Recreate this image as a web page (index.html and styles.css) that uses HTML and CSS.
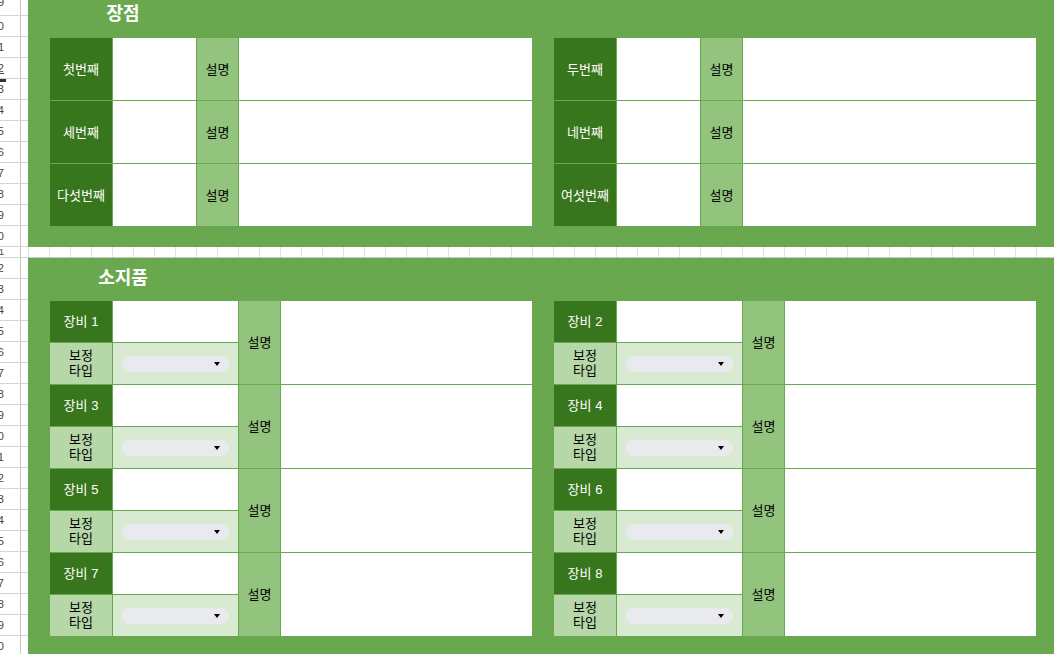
FILE: index.html
```html
<!DOCTYPE html>
<html lang="ko">
<head>
<meta charset="utf-8">
<title>장점 / 소지품</title>
<link rel="stylesheet" href="styles.css">
</head>
<body>
<div class="sheet">
  <div class="rowhdr">
    <div class="rh rh-first"><span class="num num-first">9</span><span class="pad"></span></div>
    <div class="rh"><span class="num">10</span><span class="pad"></span></div>
    <div class="rh"><span class="num">11</span><span class="pad"></span></div>
    <div class="rh"><span class="num num-ul">12</span><span class="pad"></span></div>
    <div class="rh"><span class="num num-mark">13</span><span class="pad"></span></div>
    <div class="rh"><span class="num">14</span><span class="pad"></span></div>
    <div class="rh"><span class="num">15</span><span class="pad"></span></div>
    <div class="rh"><span class="num">16</span><span class="pad"></span></div>
    <div class="rh"><span class="num">17</span><span class="pad"></span></div>
    <div class="rh"><span class="num">18</span><span class="pad"></span></div>
    <div class="rh"><span class="num">19</span><span class="pad"></span></div>
    <div class="rh"><span class="num">20</span><span class="pad"></span></div>
    <div class="rh rh-gap"><span class="num num-small">21</span><span class="pad"></span></div>
    <div class="rh"><span class="num">22</span><span class="pad"></span></div>
    <div class="rh"><span class="num">23</span><span class="pad"></span></div>
    <div class="rh"><span class="num">24</span><span class="pad"></span></div>
    <div class="rh"><span class="num">25</span><span class="pad"></span></div>
    <div class="rh"><span class="num">26</span><span class="pad"></span></div>
    <div class="rh"><span class="num">27</span><span class="pad"></span></div>
    <div class="rh"><span class="num">28</span><span class="pad"></span></div>
    <div class="rh"><span class="num">29</span><span class="pad"></span></div>
    <div class="rh"><span class="num">30</span><span class="pad"></span></div>
    <div class="rh"><span class="num">31</span><span class="pad"></span></div>
    <div class="rh"><span class="num">32</span><span class="pad"></span></div>
    <div class="rh"><span class="num">33</span><span class="pad"></span></div>
    <div class="rh"><span class="num">34</span><span class="pad"></span></div>
    <div class="rh"><span class="num">35</span><span class="pad"></span></div>
    <div class="rh"><span class="num">36</span><span class="pad"></span></div>
    <div class="rh"><span class="num">37</span><span class="pad"></span></div>
    <div class="rh"><span class="num">38</span><span class="pad"></span></div>
    <div class="rh"><span class="num">39</span><span class="pad"></span></div>
    <div class="rh"><span class="num">40</span><span class="pad"></span></div>
  </div>

  <div class="content">
    <section class="sec sec1">
      <div class="title t1">장점</div>
      <div class="tables">
        <div class="tbl tbl-a">
          <div class="hd">첫번째</div><div class="in"></div><div class="lb">설명</div><div class="in"></div>
          <div class="hd">세번째</div><div class="in"></div><div class="lb">설명</div><div class="in"></div>
          <div class="hd">다섯번째</div><div class="in"></div><div class="lb">설명</div><div class="in"></div>
        </div>
        <div class="tbl tbl-a">
          <div class="hd">두번째</div><div class="in"></div><div class="lb">설명</div><div class="in"></div>
          <div class="hd">네번째</div><div class="in"></div><div class="lb">설명</div><div class="in"></div>
          <div class="hd">여섯번째</div><div class="in"></div><div class="lb">설명</div><div class="in"></div>
        </div>
      </div>
    </section>

    <div class="gaprow"></div>

    <section class="sec sec2">
      <div class="title t2">소지품</div>
      <div class="tables">
        <div class="tbl tbl-b">
          <div class="hd">장비 1</div><div class="in"></div><div class="lb span2">설명</div><div class="in span2"></div>
          <div class="ty">보정<br>타입</div><div class="dd"><span class="chip"><span class="caret"></span></span></div>
          <div class="hd">장비 3</div><div class="in"></div><div class="lb span2">설명</div><div class="in span2"></div>
          <div class="ty">보정<br>타입</div><div class="dd"><span class="chip"><span class="caret"></span></span></div>
          <div class="hd">장비 5</div><div class="in"></div><div class="lb span2">설명</div><div class="in span2"></div>
          <div class="ty">보정<br>타입</div><div class="dd"><span class="chip"><span class="caret"></span></span></div>
          <div class="hd">장비 7</div><div class="in"></div><div class="lb span2">설명</div><div class="in span2"></div>
          <div class="ty">보정<br>타입</div><div class="dd"><span class="chip"><span class="caret"></span></span></div>
        </div>
        <div class="tbl tbl-b">
          <div class="hd">장비 2</div><div class="in"></div><div class="lb span2">설명</div><div class="in span2"></div>
          <div class="ty">보정<br>타입</div><div class="dd"><span class="chip"><span class="caret"></span></span></div>
          <div class="hd">장비 4</div><div class="in"></div><div class="lb span2">설명</div><div class="in span2"></div>
          <div class="ty">보정<br>타입</div><div class="dd"><span class="chip"><span class="caret"></span></span></div>
          <div class="hd">장비 6</div><div class="in"></div><div class="lb span2">설명</div><div class="in span2"></div>
          <div class="ty">보정<br>타입</div><div class="dd"><span class="chip"><span class="caret"></span></span></div>
          <div class="hd">장비 8</div><div class="in"></div><div class="lb span2">설명</div><div class="in span2"></div>
          <div class="ty">보정<br>타입</div><div class="dd"><span class="chip"><span class="caret"></span></span></div>
        </div>
      </div>
    </section>
  </div>
</div>
</body>
</html>
```

FILE: styles.css
```css
* {
  box-sizing: border-box;
  margin: 0;
  padding: 0;
}

html,
body {
  width: 1054px;
  height: 654px;
  overflow: hidden;
  background: #ffffff;
}

body {
  font-family: "Liberation Sans", "Noto Sans CJK KR", sans-serif;
  font-size: 13px;
}

.sheet {
  display: flex;
  height: 654px;
  overflow: hidden;
}

/* row header strip */
.rowhdr {
  width: 28px;
  flex: none;
  display: flex;
  flex-direction: column;
}

.rh {
  display: flex;
  flex: none;
  height: 21px;
  border-bottom: 1px solid #d4d4d4;
}

.rh-first {
  height: 16px;
}

.rh-gap {
  height: 11px;
}

.num {
  position: relative;
  width: 21px;
  flex: none;
  display: flex;
  justify-content: flex-end;
  align-items: center;
  padding-right: 16px;
  border-right: 1px solid #c4c4c4;
  overflow: hidden;
  white-space: nowrap;
  font-size: 11px;
  line-height: 12px;
  color: #444444;
}

.num-first {
  align-items: flex-start;
  line-height: 4px;
}

.num-small {
  font-size: 9px;
}

.num-ul {
  text-decoration: underline;
}

.num-mark::before {
  content: "";
  position: absolute;
  left: 0;
  top: 0;
  width: 6px;
  height: 3px;
  background: #333333;
}

.pad {
  flex: 1;
}

/* main content */
.content {
  flex: 1;
  min-width: 0;
  display: flex;
  flex-direction: column;
}

.sec {
  background: #6aa84f;
  flex: none;
}

.sec1 {
  height: 247px;
  padding: 0 0 21px 22px;
}

.sec2 {
  flex: 1;
  padding: 0 0 20px 22px;
}

.title {
  width: 146px;
  text-align: center;
  color: #ffffff;
  font-weight: bold;
  font-size: 18px;
}

.t1 {
  height: 38px;
  line-height: 29px;
}

.t2 {
  height: 43px;
  line-height: 41px;
}

.tables {
  display: flex;
  gap: 22px;
}

.tbl {
  width: 482px;
  flex: none;
  display: grid;
  gap: 1px;
  background: #6aa84f;
}

.tbl-a {
  grid-template-columns: 62px 83px 41px 293px;
  grid-auto-rows: 62px;
}

.tbl-b {
  grid-template-columns: 62px 125px 41px 251px;
  grid-auto-rows: 41px;
}

.hd {
  background: #38761d;
  color: #ffffff;
  display: flex;
  align-items: center;
  justify-content: center;
  white-space: nowrap;
  padding-bottom: 2px;
}

.in {
  background: #ffffff;
}

.lb {
  background: #93c47d;
  color: #000000;
  display: flex;
  align-items: center;
  justify-content: center;
  padding-bottom: 2px;
}

.span2 {
  grid-row: span 2;
}

.ty {
  background: #b6d7a8;
  color: #000000;
  display: flex;
  align-items: center;
  justify-content: center;
  text-align: center;
  line-height: 15px;
  padding-bottom: 2px;
}

.dd {
  background: #d9ead3;
  display: flex;
  align-items: center;
  padding: 0 9px;
}

.chip {
  flex: 1;
  height: 16px;
  border-radius: 8px;
  background: #e8eaed;
  display: flex;
  align-items: center;
  justify-content: flex-end;
  padding-right: 9px;
}

.caret {
  width: 0;
  height: 0;
  border-left: 3px solid transparent;
  border-right: 3px solid transparent;
  border-top: 4px solid #000000;
}

.gaprow {
  flex: none;
  height: 11px;
  border-bottom: 1px solid #c8c8c8;
  background: repeating-linear-gradient(to right, #e0e0e0 0 1px, transparent 1px 21px);
}
```
